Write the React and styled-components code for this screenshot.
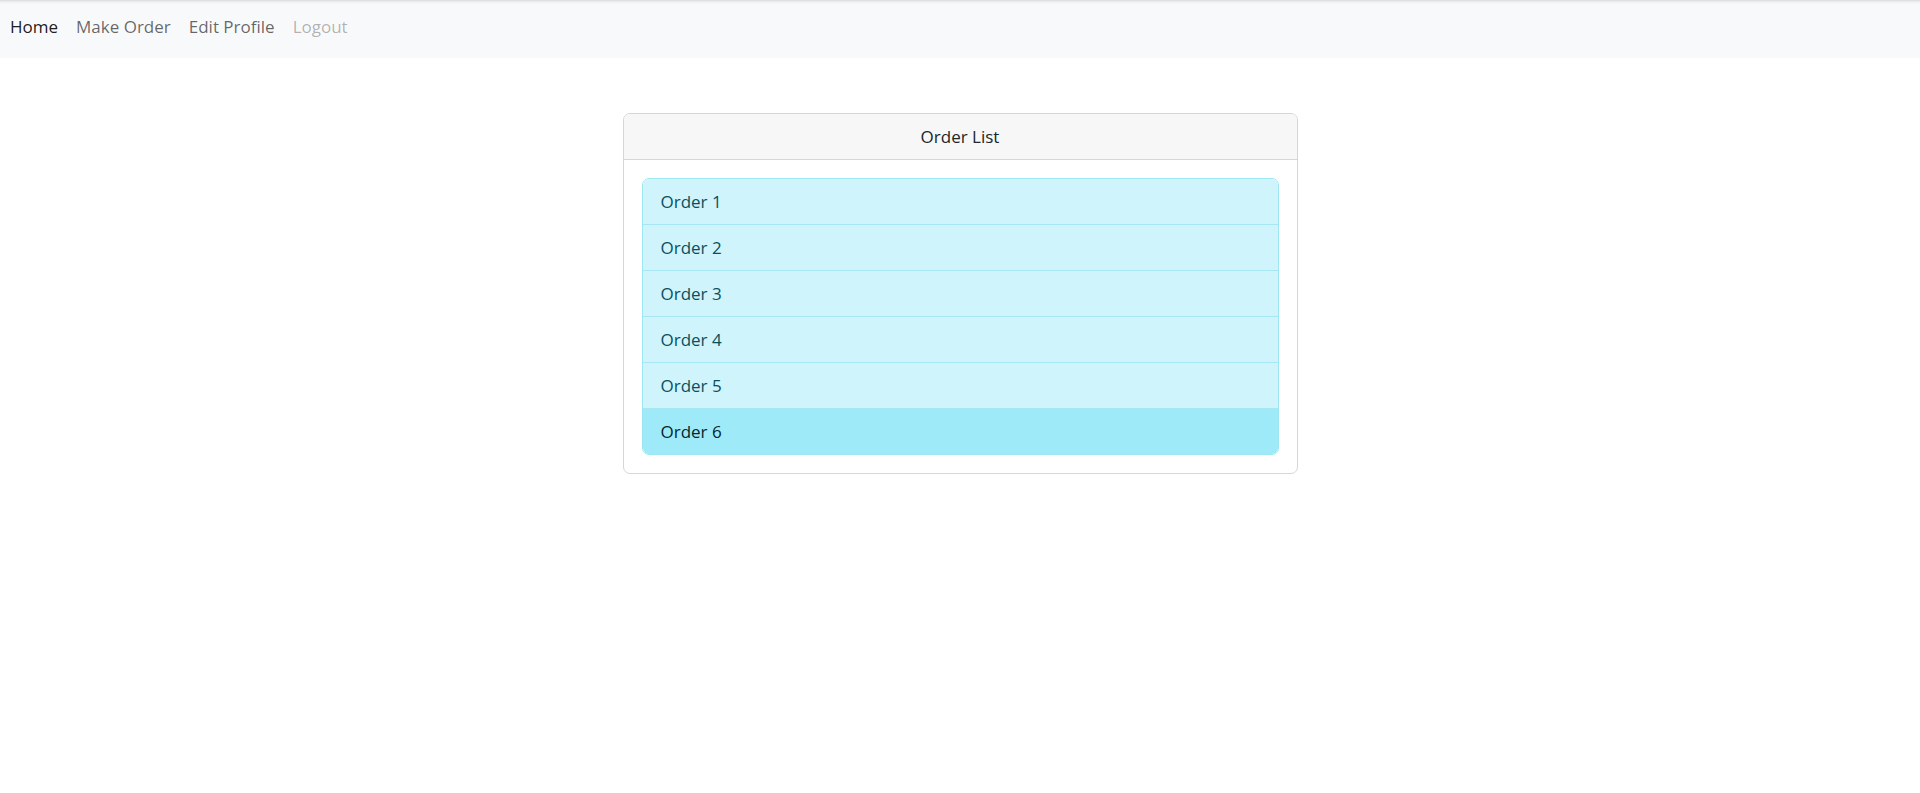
import React from 'react';
import styled, { createGlobalStyle } from 'styled-components';

const GlobalStyle = createGlobalStyle`
  body {
    margin: 0;
    background: #ffffff;
    font-family: "Open Sans", "Noto Sans", "Liberation Sans", sans-serif;
    font-size: 17px;
    color: #212529;
  }
`;

const NavBar = styled.nav`
  display: flex;
  align-items: center;
  height: 58px;
  padding: 0 0 6px 1px;
  box-sizing: border-box;
  background: linear-gradient(#d9dbdd 0, #eef0f2 2px, #f8f9fa 4px);
`;

const NavLink = styled.a`
  padding: 0 9px;
  line-height: 27px;
  text-decoration: none;
  cursor: ${(p) => (p.disabled ? 'default' : 'pointer')};
  color: ${(p) =>
    p.active ? 'rgba(0, 0, 0, 0.9)' : p.disabled ? 'rgba(0, 0, 0, 0.3)' : 'rgba(0, 0, 0, 0.6)'};
`;

const Main = styled.main`
  display: flex;
  justify-content: center;
  padding-top: 55px;
`;

const Card = styled.div`
  width: 673px;
  border: 1px solid #d6d6d6;
  border-radius: 7px;
  overflow: hidden;
  background: #fff;
`;

const CardHeader = styled.div`
  padding: 9px 18px;
  line-height: 27px;
  text-align: center;
  background: #f7f7f7;
  border-bottom: 1px solid #d6d6d6;
  color: #212529;
`;

const CardBody = styled.div`
  padding: 18px;
`;

const List = styled.ul`
  list-style: none;
  margin: 0;
  padding: 0;
  border-radius: 7px;
  overflow: hidden;
  border: 1px solid #9fe6f3;
`;

const Item = styled.li`
  padding: 9px 18px;
  line-height: 27px;
  background: ${(p) => (p.active ? '#9eeaf8' : '#cff4fc')};
  color: ${(p) => (p.active ? '#03262d' : '#0b4f5c')};
  border-top: 1px solid ${(p) => (p.first ? 'transparent' : '#a6e7f3')};
  margin-top: ${(p) => (p.first ? '-1px' : '0')};
  cursor: pointer;
`;

const orders = ['Order 1', 'Order 2', 'Order 3', 'Order 4', 'Order 5', 'Order 6'];

const App = () => {
  return (
    <>
      <GlobalStyle />
      <NavBar>
        <NavLink active>Home</NavLink>
        <NavLink>Make Order</NavLink>
        <NavLink>Edit Profile</NavLink>
        <NavLink disabled>Logout</NavLink>
      </NavBar>
      <Main>
        <Card>
          <CardHeader>Order List</CardHeader>
          <CardBody>
            <List>
              {orders.map((o, i) => (
                <Item key={o} first={i === 0} active={i === orders.length - 1}>
                  {o}
                </Item>
              ))}
            </List>
          </CardBody>
        </Card>
      </Main>
    </>
  );
};

export default App;
